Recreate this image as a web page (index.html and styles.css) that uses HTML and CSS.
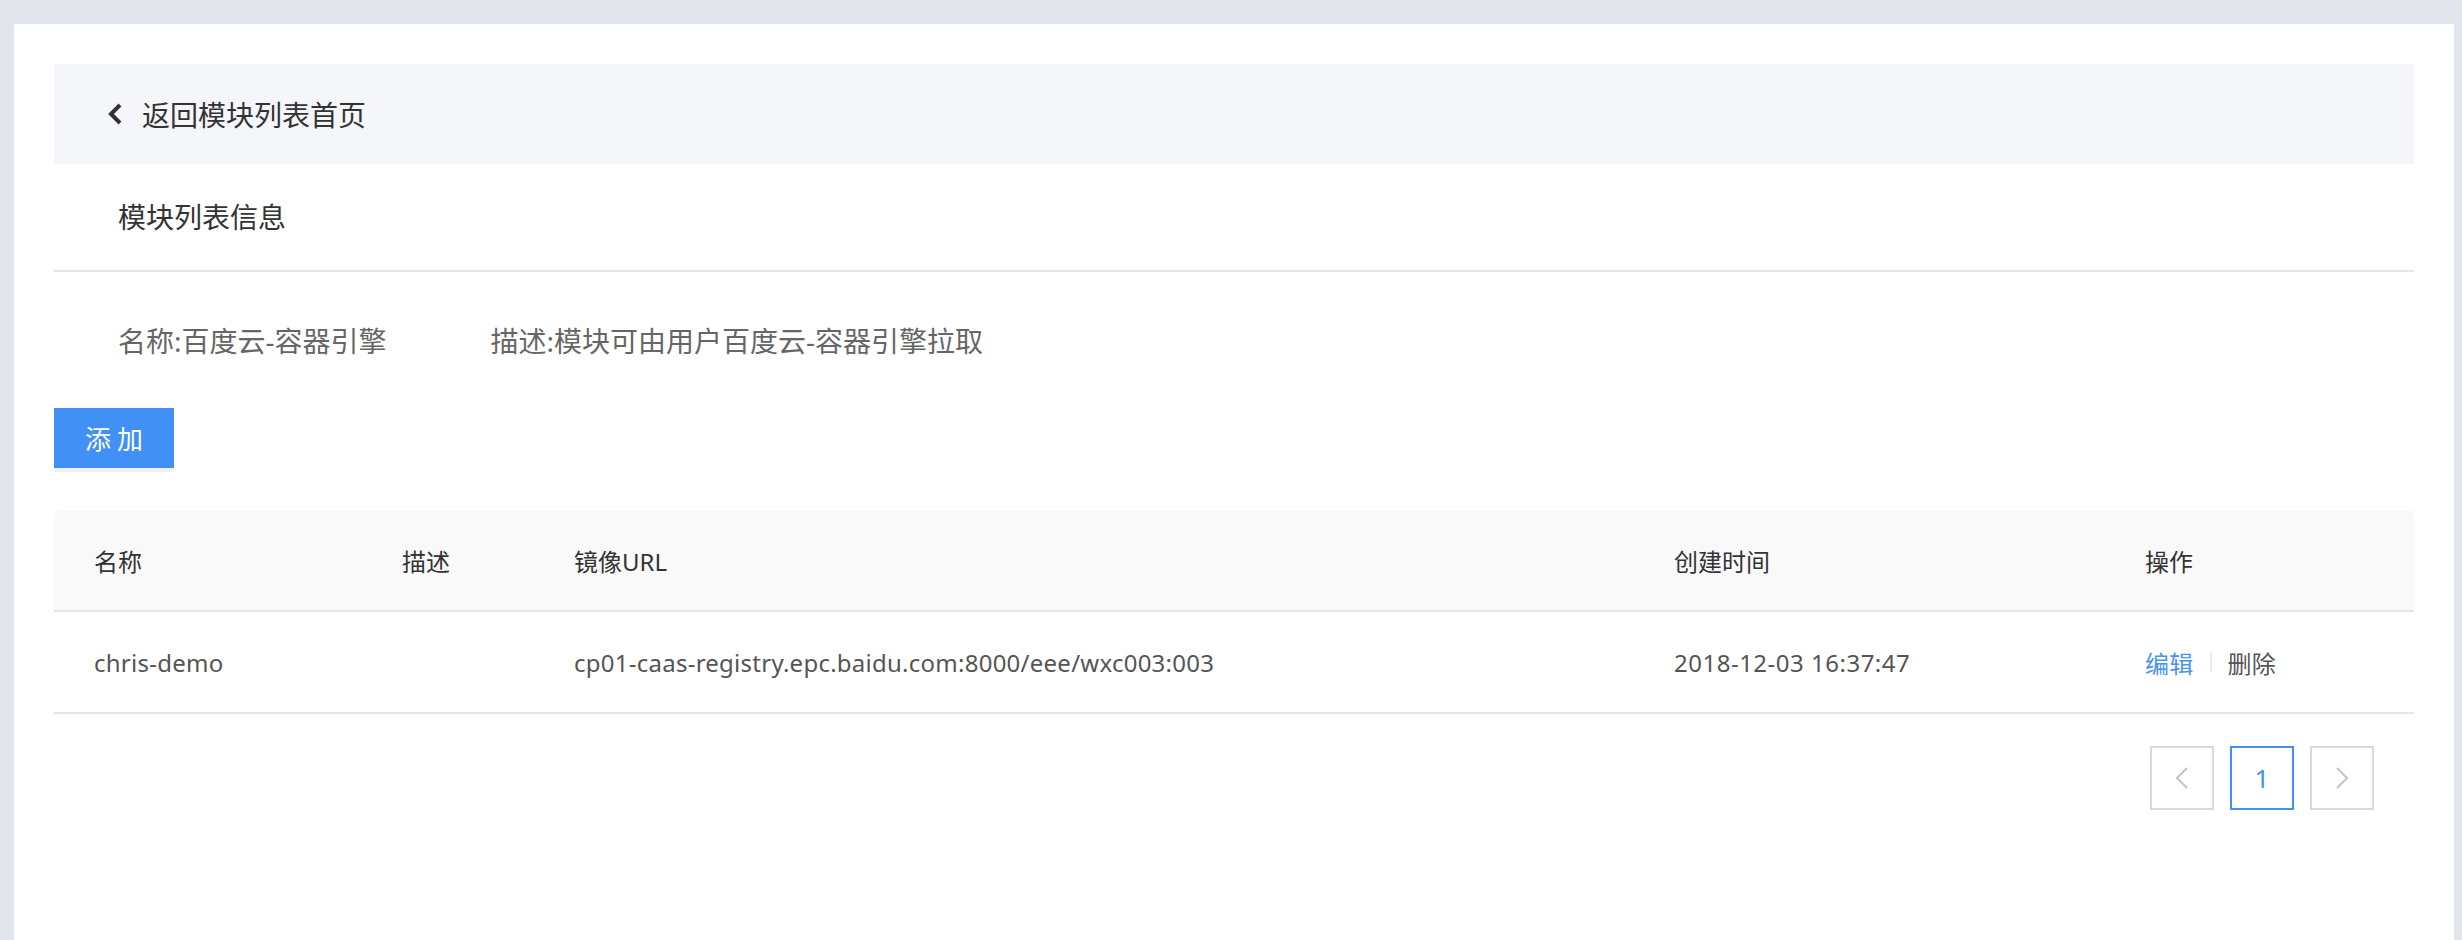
FILE: index.html
```html
<!DOCTYPE html>
<html lang="zh-CN">

<head>
    <meta charset="UTF-8">
    <meta name="viewport" content="width=device-width, initial-scale=1.0">
    <title>模块列表信息</title>
    <link rel="stylesheet" href="styles.css">
</head>

<body>
    <div class="panel">
        <div class="back-bar">
            <svg class="back-icon" width="16" height="24" viewBox="0 0 16 24">
                <polyline points="13,3 4,12 13,21" fill="none" stroke="#333" stroke-width="4" />
            </svg>
            <span>返回模块列表首页</span>
        </div>

        <div class="section-title">模块列表信息</div>

        <div class="module-info">
            <span class="info-name">名称:百度云-容器引擎</span>
            <span>描述:模块可由用户百度云-容器引擎拉取</span>
        </div>

        <button class="btn-add">添加</button>

        <div class="table">
            <div class="table-head">
                <div>名称</div>
                <div>描述</div>
                <div>镜像URL</div>
                <div>创建时间</div>
                <div>操作</div>
            </div>
            <div class="table-row">
                <div>chris-demo</div>
                <div></div>
                <div>cp01-caas-registry.epc.baidu.com:8000/eee/wxc003:003</div>
                <div class="time">2018-12-03 16:37:47</div>
                <div class="ops">
                    <a class="link-edit">编辑</a>
                    <span class="ops-sep"></span>
                    <a class="link-del">删除</a>
                </div>
            </div>
        </div>

        <div class="pager">
            <div class="page-btn">
                <svg width="14" height="22" viewBox="0 0 14 22">
                    <polyline points="12,1 2,11 12,21" fill="none" stroke="#c4c4c4" stroke-width="2" />
                </svg>
            </div>
            <div class="page-btn active">1</div>
            <div class="page-btn">
                <svg width="14" height="22" viewBox="0 0 14 22">
                    <polyline points="2,1 12,11 2,21" fill="none" stroke="#c4c4c4" stroke-width="2" />
                </svg>
            </div>
        </div>
    </div>
</body>

</html>
```

FILE: styles.css
```css
body {
    margin: 0;
    background-color: #e2e5eb;
    font-family: "Noto Sans", "Noto Sans CJK SC", sans-serif;
    color: #333;
}

.panel {
    margin: 24px 8px 0 14px;
    padding: 40px;
    min-height: calc(100vh - 104px);
    background-color: #fff;
}

/* 返回 */
.back-bar {
    height: 100px;
    display: flex;
    align-items: center;
    padding-left: 53px;
    background-color: #f5f6fa;
    font-size: 28px;
}

.back-icon {
    margin-right: 19px;
}

.section-title {
    height: 106px;
    line-height: 106px;
    padding-left: 64px;
    font-size: 28px;
    border-bottom: 2px solid #e6e6e6;
}

.module-info {
    height: 136px;
    display: flex;
    align-items: center;
    padding-left: 64px;
    font-size: 28px;
    color: #666;
}

.info-name {
    margin-right: 104px;
}

.btn-add {
    display: block;
    width: 120px;
    height: 60px;
    padding: 0 0 0 6px;
    border: none;
    background-color: #4190f6;
    color: #fff;
    font-family: inherit;
    font-size: 26px;
    letter-spacing: 6px;
    box-shadow: 0 4px 0 #f0f1f3;
}

/* 表格 */
.table {
    margin-top: 42px;
}

.table-head,
.table-row {
    display: grid;
    grid-template-columns: 308px 172px 1100px 471px 1fr;
    height: 100px;
    align-items: center;
    border-bottom: 2px solid #e6e6e6;
    font-size: 24px;
}

.table-head {
    background-color: #f9f9f9;
    border-radius: 6px 6px 0 0;
}

.table-row {
    color: #555;
    letter-spacing: 0.25px;
}

.table-row .time {
    letter-spacing: 0.5px;
}

.table-head>div,
.table-row>div {
    padding-left: 40px;
}

.ops {
    display: flex;
    align-items: center;
}

.link-edit {
    color: #4a94f0;
}

.ops-sep {
    width: 2px;
    height: 20px;
    margin: 0 16px;
    background-color: #ececec;
}

/* 分页 */
.pager {
    display: flex;
    justify-content: flex-end;
    gap: 16px;
    margin-top: 32px;
    padding-right: 40px;
}

.page-btn {
    width: 60px;
    height: 60px;
    display: flex;
    justify-content: center;
    align-items: center;
    border: 2px solid #d9d9d9;
    font-size: 26px;
}

.page-btn.active {
    border-color: #4190f6;
    color: #4190f6;
}
```
